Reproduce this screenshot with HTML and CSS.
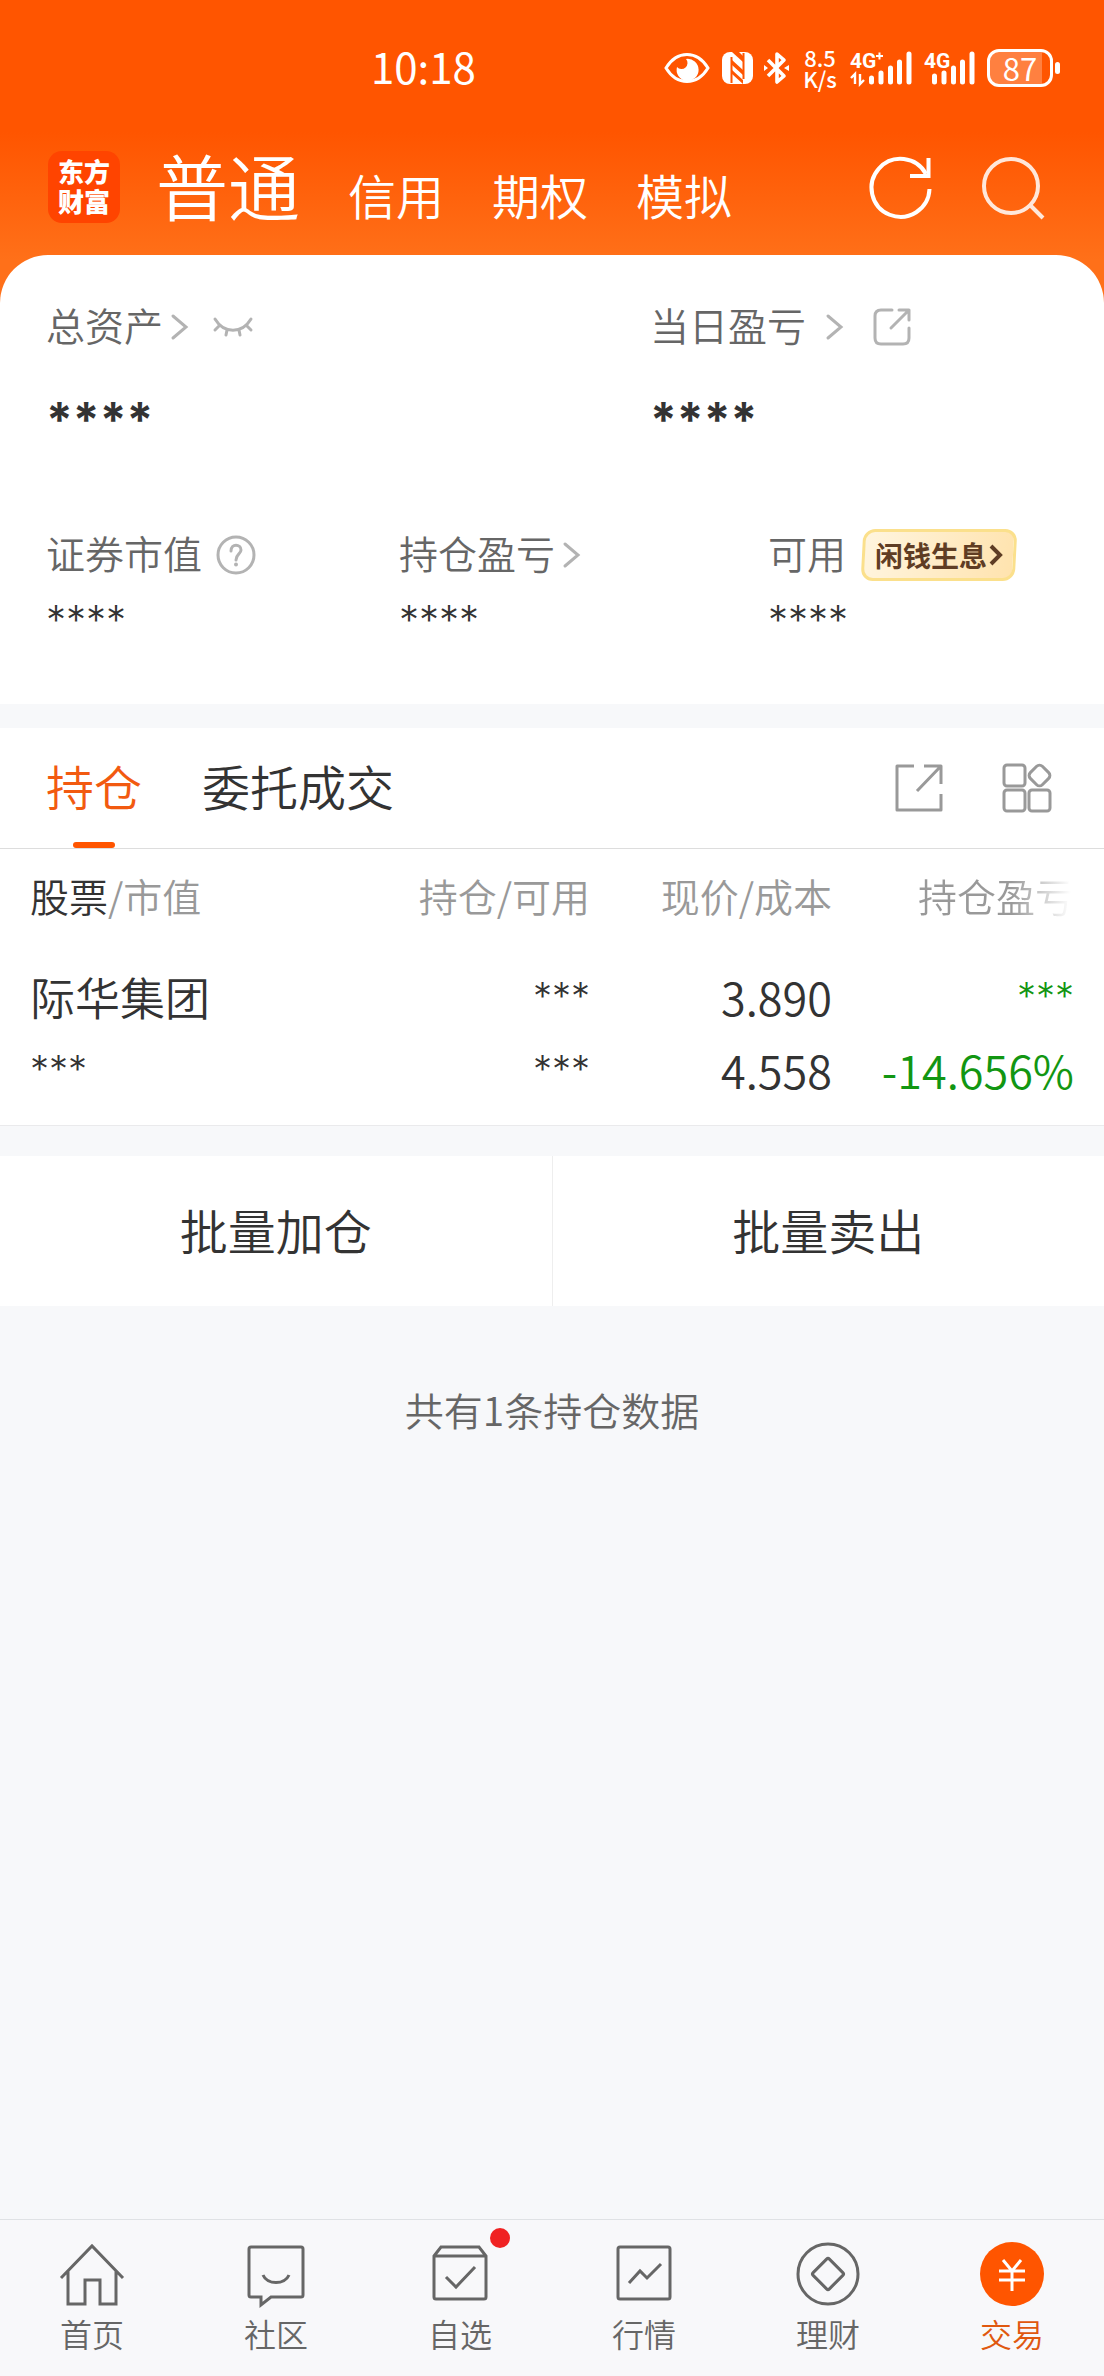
FILE: index.html
```html
<!DOCTYPE html>
<html lang="zh-CN">
<head>
<meta charset="utf-8">
<meta name="viewport" content="width=device-width, initial-scale=1">
<title>交易 - 东方财富</title>
<link rel="stylesheet" href="styles.css">
</head>
<body>
<header class="top">
  <div class="status">
    <time class="clock">10:18</time>
    <div class="status-icons">
      <svg class="st-eye" width="46" height="32" viewBox="0 0 46 32"><path d="M2 16C13-2 33-2 44 16C33 34 13 34 2 16Z" fill="none" stroke="#fff" stroke-width="3"/><path d="M22 7A11 11 0 1 1 13 15A6 6 0 0 0 22 7Z" fill="#fff"/></svg>
      <svg class="st-nfc" width="31" height="32" viewBox="0 0 31 32"><rect width="31" height="32" rx="8" fill="#fff"/><path d="M9.500 5V31M21.500 1V27" stroke="#ff5500" stroke-width="2" fill="none"/><path d="M10 8L21 18V23L10 13ZM10 18L21 28V32L10 22Z" fill="#ff5500"/><path d="M10 0L21 10V4L17 0Z" fill="#ff5500"/></svg>
      <svg class="st-bt" width="25" height="34" viewBox="0 0 25 34"><path d="M4 9L20 25L13 31V3L20 9L4 25" fill="none" stroke="#fff" stroke-width="3.600" stroke-linejoin="round"/><path d="M0 14L4 17L0 20ZM25 14L20 17L25 20Z" fill="#fff"/></svg>
      <div class="speed"><span>8.5</span><span>K/s</span></div>
      <svg class="st-sig" width="62" height="36" viewBox="0 0 62 36"><text x="0" y="18" class="sig-label">4G</text><path d="M26 6H33M29.500 2.500V9.500" stroke="#fff" stroke-width="2"/><path d="M1 28L5 24V34M10 24V34L14 30" fill="none" stroke="#fff" stroke-width="2.400"/><path d="M21.500 28V32M31 23V32M40.500 18V32M49.500 12V32M59 4V32" stroke="#fff" stroke-width="5" stroke-linecap="round"/></svg>
      <svg class="st-sig" width="51" height="36" viewBox="0 0 51 36"><text x="0" y="18" class="sig-label">4G</text><path d="M10.500 26V32M20 23V32M29.500 18V32M38.500 12V32M48 4V32" stroke="#fff" stroke-width="5" stroke-linecap="round"/></svg>
      <div class="battery"><span>87</span></div>
    </div>
  </div>
  <div class="account-bar">
    <div class="logo">东方<br>财富</div>
    <nav class="accounts">
      <a href="#" class="account active">普通</a>
      <a href="#" class="account">信用</a>
      <a href="#" class="account">期权</a>
      <a href="#" class="account">模拟</a>
    </nav>
    <div class="actions">
      <button class="icon-btn" aria-label="刷新"><svg width="64" height="64" viewBox="0 0 64 64" fill="none" stroke="#fff" stroke-width="4"><path d="M60.500 33A29 29 0 1 1 57 18"/><path d="M59.500 2V20H41"/></svg></button>
      <button class="icon-btn search" aria-label="搜索"><svg width="64" height="64" viewBox="0 0 64 64" fill="none" stroke="#fff" stroke-width="4"><circle cx="30" cy="30" r="27"/><path d="M49 49L62 62"/></svg></button>
    </div>
  </div>
</header>

<main>
  <section class="summary">
    <div class="totals">
      <div class="stat">
        <div class="label">总资产
          <svg class="chev" width="18" height="26" viewBox="0 0 18 26"><path d="M2 2L15 13L2 24"/></svg>
          <button class="icon-btn eye" aria-label="显示金额"><svg width="40" height="20" viewBox="0 0 40 20" fill="none" stroke="#b3b3b3" stroke-width="3" stroke-linecap="round"><path d="M2 2C11 17 29 17 38 2M6 9L2 13M14 13L13 18M26 13L27 18M34 9L38 13"/></svg></button>
        </div>
        <div class="big">****</div>
      </div>
      <div class="stat">
        <div class="label daily">当日盈亏
          <svg class="chev" width="18" height="26" viewBox="0 0 18 26"><path d="M2 2L15 13L2 24"/></svg>
          <button class="icon-btn" aria-label="分享盈亏"><svg width="40" height="40" viewBox="0 0 40 40" fill="none" stroke="#b3b3b3" stroke-width="3" stroke-linecap="round" stroke-linejoin="round"><path d="M20 3H9Q3 3 3 9V31Q3 37 9 37H31Q37 37 37 31V21M27 3H37V13M37 3L19 21"/></svg></button>
        </div>
        <div class="big">****</div>
      </div>
    </div>
    <div class="details">
      <div class="stat">
        <div class="label">证券市值
          <button class="icon-btn help" aria-label="说明"><svg width="40" height="40" viewBox="0 0 40 40" fill="none" stroke="#b3b3b3" stroke-width="3"><circle cx="20" cy="20" r="18"/><path d="M15 16C15 8 25 9 25 15C25 19 20 19 20 25" stroke-linecap="round"/><circle cx="20" cy="29.500" r="2" fill="#b3b3b3" stroke="none"/></svg></button>
        </div>
        <div class="small">****</div>
      </div>
      <div class="stat">
        <div class="label">持仓盈亏
          <svg class="chev" width="18" height="26" viewBox="0 0 18 26"><path d="M2 2L15 13L2 24"/></svg>
        </div>
        <div class="small">****</div>
      </div>
      <div class="stat">
        <div class="label">可用
          <a href="#" class="promo">闲钱生息<svg width="14" height="22" viewBox="0 0 14 22"><path d="M2 2L11 11L2 20" fill="none" stroke="#5f3d24" stroke-width="4"/></svg></a>
        </div>
        <div class="small">****</div>
      </div>
    </div>
  </section>

  <section class="positions">
    <div class="tabs">
      <button class="tab active">持仓</button>
      <button class="tab">委托成交</button>
      <div class="tab-tools">
        <button class="icon-btn" aria-label="分享"><svg width="50" height="50" viewBox="0 0 50 50" fill="none" stroke="#999" stroke-width="3" stroke-linejoin="round"><path d="M20 3H3V47H47V31M30 3H47V21M47 3L23 28"/></svg></button>
        <button class="icon-btn" aria-label="更多功能"><svg width="50" height="50" viewBox="0 0 50 50" fill="none" stroke="#999" stroke-width="3"><rect x="2" y="2" width="21" height="21" rx="3"/><rect x="2" y="27" width="21" height="21" rx="3"/><rect x="27" y="27" width="21" height="21" rx="3"/><rect x="29" y="4" width="17" height="17" rx="4" transform="rotate(45 37.500 12.500)"/></svg></button>
      </div>
    </div>
    <table class="holdings">
      <colgroup><col class="c-name"><col><col><col></colgroup>
      <thead>
        <tr><th><b>股票</b>/市值</th><th>持仓/可用</th><th>现价/成本</th><th><span class="fade">持仓盈亏</span></th></tr>
      </thead>
      <tbody>
        <tr>
          <td><span class="name">际华集团</span><span class="mask">***</span></td>
          <td><span class="mask">***</span><span class="mask">***</span></td>
          <td><span>3.890</span><span>4.558</span></td>
          <td class="down"><span class="mask">***</span><span>-14.656%</span></td>
        </tr>
      </tbody>
    </table>
  </section>

  <div class="batch">
    <button>批量加仓</button>
    <button>批量卖出</button>
  </div>
  <p class="count">共有1条持仓数据</p>
</main>

<nav class="bottom">
  <a href="#"><svg width="66" height="66" viewBox="0 0 66 66"><path d="M2 37L33 5L64 37M9 30V63H26V39H41V63H57V30"/></svg>首页</a>
  <a href="#"><svg width="66" height="66" viewBox="0 0 66 66"><path d="M8 6H58Q60 6 60 8V54Q60 56 58 56H28L18 64V56H8Q6 56 6 54V8Q6 6 8 6Z"/><path d="M20 34C24 44 42 44 46 34"/></svg>社区</a>
  <a href="#"><svg width="66" height="66" viewBox="0 0 66 66"><path d="M7 15L14 6H52L59 15V56Q59 58 57 58H9Q7 58 7 56ZM7 15H59M19 36L29 46L48 26"/></svg>自选<i class="dot"></i></a>
  <a href="#"><svg width="66" height="66" viewBox="0 0 66 66"><rect x="7" y="6" width="52" height="52" rx="2"/><path d="M18 42L29 30L36 37L50 23"/></svg>行情</a>
  <a href="#"><svg width="66" height="66" viewBox="0 0 66 66"><circle cx="33" cy="33" r="30"/><rect x="21.500" y="21.500" width="23" height="23" rx="2" transform="rotate(45 33 33)"/></svg>理财</a>
  <a href="#" class="active"><svg width="66" height="66" viewBox="0 0 66 66"><circle cx="33" cy="33" r="32" class="coin"/><path d="M24 19L33 30L42 19M20 30H46M20 39H46M33 29V50"/></svg>交易</a>
</nav>
</body>
</html>
```
FILE: styles.css
```css
* { box-sizing: border-box; }
body {
  margin: 0;
  min-height: 100vh;
  display: flex;
  flex-direction: column;
  background: #f7f8fa;
  color: #333;
  font-family: "Noto Sans CJK SC", sans-serif;
  font-weight: 350;
}
a { color: inherit; text-decoration: none; }
button {
  margin: 0;
  padding: 0;
  border: 0;
  background: none;
  color: inherit;
  font: inherit;
}
svg { display: block; flex: none; overflow: visible; }
.icon-btn { display: flex; }

.top {
  padding-bottom: 48px;
  margin-bottom: -48px;
  background: linear-gradient(#ff5500 0, #ff5500 132px, #ff7019 260px);
  color: #fff;
}
.status {
  display: flex;
  justify-content: space-between;
  align-items: center;
  height: 136px;
  padding: 0 44px 0 371px;
}
.clock { padding-bottom: 6px; font-size: 42px; font-weight: 400; }
.status-icons { display: flex; align-items: center; }
.st-nfc { margin-left: 12px; }
.st-bt { margin-left: 11px; }
.speed {
  display: flex;
  flex-direction: column;
  width: 36px;
  margin-left: 13px;
  font-size: 22px;
  font-weight: 500;
  line-height: 21px;
  text-align: center;
}
.st-sig { margin-left: 12px; }
.sig-label { font-size: 21px; font-weight: 700; fill: #fff; font-family: Roboto, sans-serif; }
.battery {
  position: relative;
  display: flex;
  align-items: center;
  justify-content: center;
  width: 66px;
  height: 38px;
  margin: 0 7px 0 12px;
  border: 3px solid #fff;
  border-radius: 12px;
  background: linear-gradient(90deg, #ff8040 86%, transparent 86%);
  font-size: 31px;
  font-weight: 400;
  line-height: 32px;
}
.battery::after {
  content: "";
  position: absolute;
  right: -10px;
  top: 10px;
  width: 5px;
  height: 12px;
  border-radius: 3px;
  background: #fff;
}
.account-bar {
  display: flex;
  align-items: center;
  height: 119px;
  padding: 0 59px 0 48px;
}
.logo {
  width: 72px;
  height: 72px;
  margin-bottom: 18px;
  padding-top: 5px;
  border-radius: 14px;
  background: #ff4400;
  font-size: 26px;
  font-weight: 900;
  line-height: 30px;
  text-align: center;
}
.accounts {
  display: flex;
  align-items: baseline;
  gap: 48px;
  margin: 0 0 14px 36px;
}
.account { font-size: 48px; line-height: 80px; }
.account.active { font-size: 72px; }
.actions {
  display: flex;
  gap: 48px;
  margin: 0 0 16px auto;
}
.search { opacity: .85; }

.summary {
  padding: 45px 46px 44px;
  border-radius: 48px 48px 0 0;
  background: #fff;
}
.totals { display: grid; grid-template-columns: 604fr 408fr; }
.details {
  display: grid;
  grid-template-columns: 353fr 369fr 290fr;
  margin-top: 84px;
}
.label {
  display: flex;
  align-items: center;
  height: 48px;
  color: #666;
  font-size: 39px;
  white-space: nowrap;
}
.label > * { margin-top: 6px; }
.chev { margin-left: 8px; fill: none; stroke: #b3b3b3; stroke-width: 3; stroke-linecap: round; }
.daily .chev { margin-left: 20px; margin-right: 28px; }
.eye { margin-left: 24px; }
.help { margin-left: 14px; }
.big, .small { font-family: Inter, sans-serif; }
.big { height: 96px; padding-top: 40px; font-size: 48px; font-weight: 700; line-height: 64px; }
.small { height: 84px; padding-top: 20px; font-size: 40px; font-weight: 300; line-height: 48px; }
.promo {
  position: relative;
  z-index: 0;
  display: flex;
  align-items: center;
  gap: 2px;
  height: 52px;
  margin-left: 14px;
  padding: 0 15px;
  color: #5f3d24;
  font-size: 28px;
  font-weight: 700;
}
.promo::before {
  content: "";
  position: absolute;
  z-index: -1;
  inset: 0 2px;
  border: 3px solid #fbe08c;
  border-radius: 12px;
  background: linear-gradient(100deg, #fff5df, #ffe3ae);
  transform: skewX(-3deg);
}

.positions { margin-top: 24px; border-bottom: 1px solid #eaeaec; background: #fff; }
.tabs {
  display: flex;
  align-items: center;
  gap: 60px;
  height: 121px;
  padding: 0 52px 0 46px;
  border-bottom: 1px solid #ddd;
}
.tab { position: relative; height: 120px; padding-bottom: 6px; font-size: 48px; }
.tab.active { color: #f25a10; }
.tab.active::after {
  content: "";
  position: absolute;
  left: calc(50% - 21px);
  bottom: 0;
  width: 42px;
  height: 6px;
  border-radius: 3px;
  background: #ff5500;
}
.tab-tools { display: flex; gap: 58px; margin-left: auto; }

.holdings {
  width: 100%;
  padding: 0 30px;
  border-spacing: 0;
  table-layout: fixed;
}
.c-name { width: 318px; }
.holdings th {
  height: 96px;
  padding: 0 0 4px;
  color: #999;
  font-size: 39px;
  font-weight: 350;
  text-align: right;
  white-space: nowrap;
}
.holdings b { color: #333; font-weight: 350; }
.fade {
  background: linear-gradient(90deg, #999 60%, #fff 98%);
  background-clip: text;
  -webkit-background-clip: text;
  color: transparent;
}
.holdings td {
  height: 180px;
  padding: 0 0 4px;
  font-size: 45px;
  text-align: right;
  vertical-align: middle;
}
.holdings th:first-child, .holdings td:first-child { text-align: left; }
.holdings td span { display: block; height: 73px; line-height: 73px; }
.holdings .mask { font-family: Inter, sans-serif; font-size: 38px; font-weight: 300; }
.down { color: #129612; }

.batch { display: flex; margin-top: 30px; background: #fff; }
.batch button { flex: 1; height: 150px; padding-bottom: 4px; font-size: 48px; }
.batch button + button { border-left: 1px solid #eee; }
.count {
  margin: 74px 0;
  color: #666;
  font-size: 39px;
  line-height: 58px;
  text-align: center;
}

.bottom {
  display: grid;
  grid-template-columns: repeat(6, 1fr);
  margin-top: auto;
  padding: 21px 0 19px;
  border-top: 1px solid #e0e2e5;
  background: #f8f8fa;
}
.bottom a {
  position: relative;
  display: flex;
  flex-direction: column;
  align-items: center;
  gap: 2px;
  color: #666;
  font-size: 32px;
  line-height: 48px;
}
.bottom svg { fill: none; stroke: #666; stroke-width: 3; }
.bottom .active { color: #e0580f; }
.bottom .active svg { stroke: #fff; }
.bottom .coin { fill: #ff5500; stroke: none; }
.dot {
  position: absolute;
  top: -13px;
  left: calc(50% + 30px);
  width: 20px;
  height: 20px;
  border-radius: 50%;
  background: #f02222;
}
```
